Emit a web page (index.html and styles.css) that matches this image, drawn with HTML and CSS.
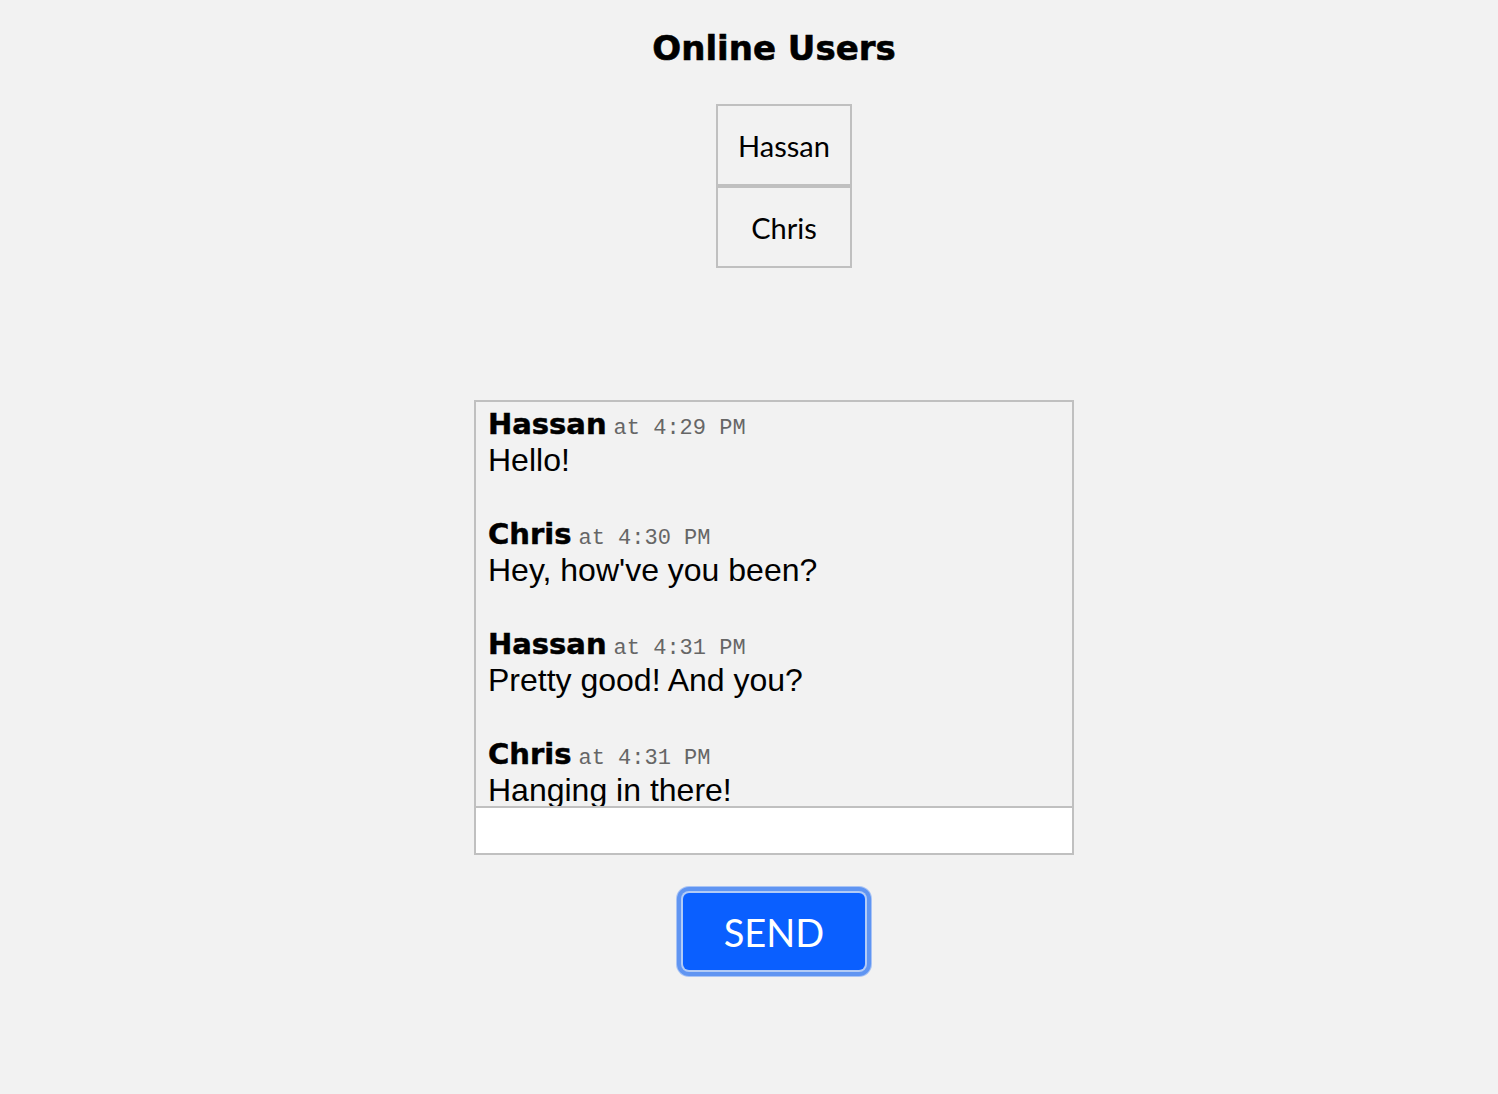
FILE: index.html
```html
<!DOCTYPE html>
<html>
<head>
<meta charset="utf-8">
<link rel="stylesheet" href="styles.css">
</head>
<body>
<div class="page">
  <h1 class="title">Online Users</h1>
  <ul class="users">
    <li class="user">Hassan</li>
    <li class="user">Chris</li>
  </ul>
  <div class="chat">
    <div class="messages">
      <div class="msg">
        <div class="meta"><span class="name">Hassan</span> <span class="time">at 4:29 PM</span></div>
        <div class="text">Hello!</div>
      </div>
      <div class="msg">
        <div class="meta"><span class="name">Chris</span> <span class="time">at 4:30 PM</span></div>
        <div class="text">Hey, how've you been?</div>
      </div>
      <div class="msg">
        <div class="meta"><span class="name">Hassan</span> <span class="time">at 4:31 PM</span></div>
        <div class="text">Pretty good! And you?</div>
      </div>
      <div class="msg">
        <div class="meta"><span class="name">Chris</span> <span class="time">at 4:31 PM</span></div>
        <div class="text">Hanging in there!</div>
      </div>
    </div>
    <input class="input" type="text">
  </div>
  <div class="actions">
    <button class="send">SEND</button>
  </div>
</div>
</body>
</html>
```
FILE: styles.css
```css
html, body {
  margin: 0;
  padding: 0;
  background: #f2f2f2;
}
.page {
  display: flex;
  flex-direction: column;
  align-items: center;
  padding: 26px 0 60px 50px;
}
.title {
  margin: 0;
  font-family: "DejaVu Sans", sans-serif;
  font-weight: 700;
  font-size: 34px;
  line-height: 44px;
  color: #000;
  -webkit-text-stroke: 0.6px #000;
}
.users {
  list-style: none;
  margin: 34px 0 0 0;
  padding: 0;
  display: flex;
  flex-direction: column;
}
.user {
  width: 132px;
  height: 78px;
  border: 2px solid #c0c0c0;
  display: flex;
  align-items: center;
  justify-content: center;
  font-family: "Lato", sans-serif;
  font-size: 29px;
  color: #000;
  margin-left: 20px;
}
.chat {
  margin-top: 132px;
  width: 596px;
  border: 2px solid #c0c0c0;
  display: flex;
  flex-direction: column;
}
.messages {
  height: 404px;
  overflow: hidden;
  padding: 4px 12px 0;
  box-sizing: border-box;
}
.msg {
  margin-bottom: 38px;
}
.meta {
  line-height: 36px;
  height: 36px;
}
.name {
  font-family: "DejaVu Sans", sans-serif;
  font-weight: 700;
  font-size: 29px;
  color: #000;
  -webkit-text-stroke: 0.5px #000;
}
.time {
  font-family: "Liberation Mono", monospace;
  font-size: 22px;
  color: #666;
  margin-left: 3px;
}
.text {
  font-family: "Liberation Sans", Arial, sans-serif;
  font-size: 32px;
  line-height: 36px;
  color: #000;
}
.input {
  display: block;
  height: 47px;
  border: 0;
  border-top: 2px solid #c0c0c0;
  background: #fff;
  margin: 0;
  padding: 0 12px;
  box-sizing: border-box;
  width: 100%;
  outline: none;
}
.actions {
  margin-top: 38px;
}
.send {
  width: 182px;
  height: 77px;
  background: #0a5fff;
  color: #fff;
  border: 0;
  border-radius: 6px;
  font-family: "Lato", sans-serif;
  font-size: 38px;
  box-shadow: 0 0 0 2px #b2cbf6, 0 0 0 6px #6095f2, 0 0 0 7px #a9c4f5;
  padding: 0;
}
```
